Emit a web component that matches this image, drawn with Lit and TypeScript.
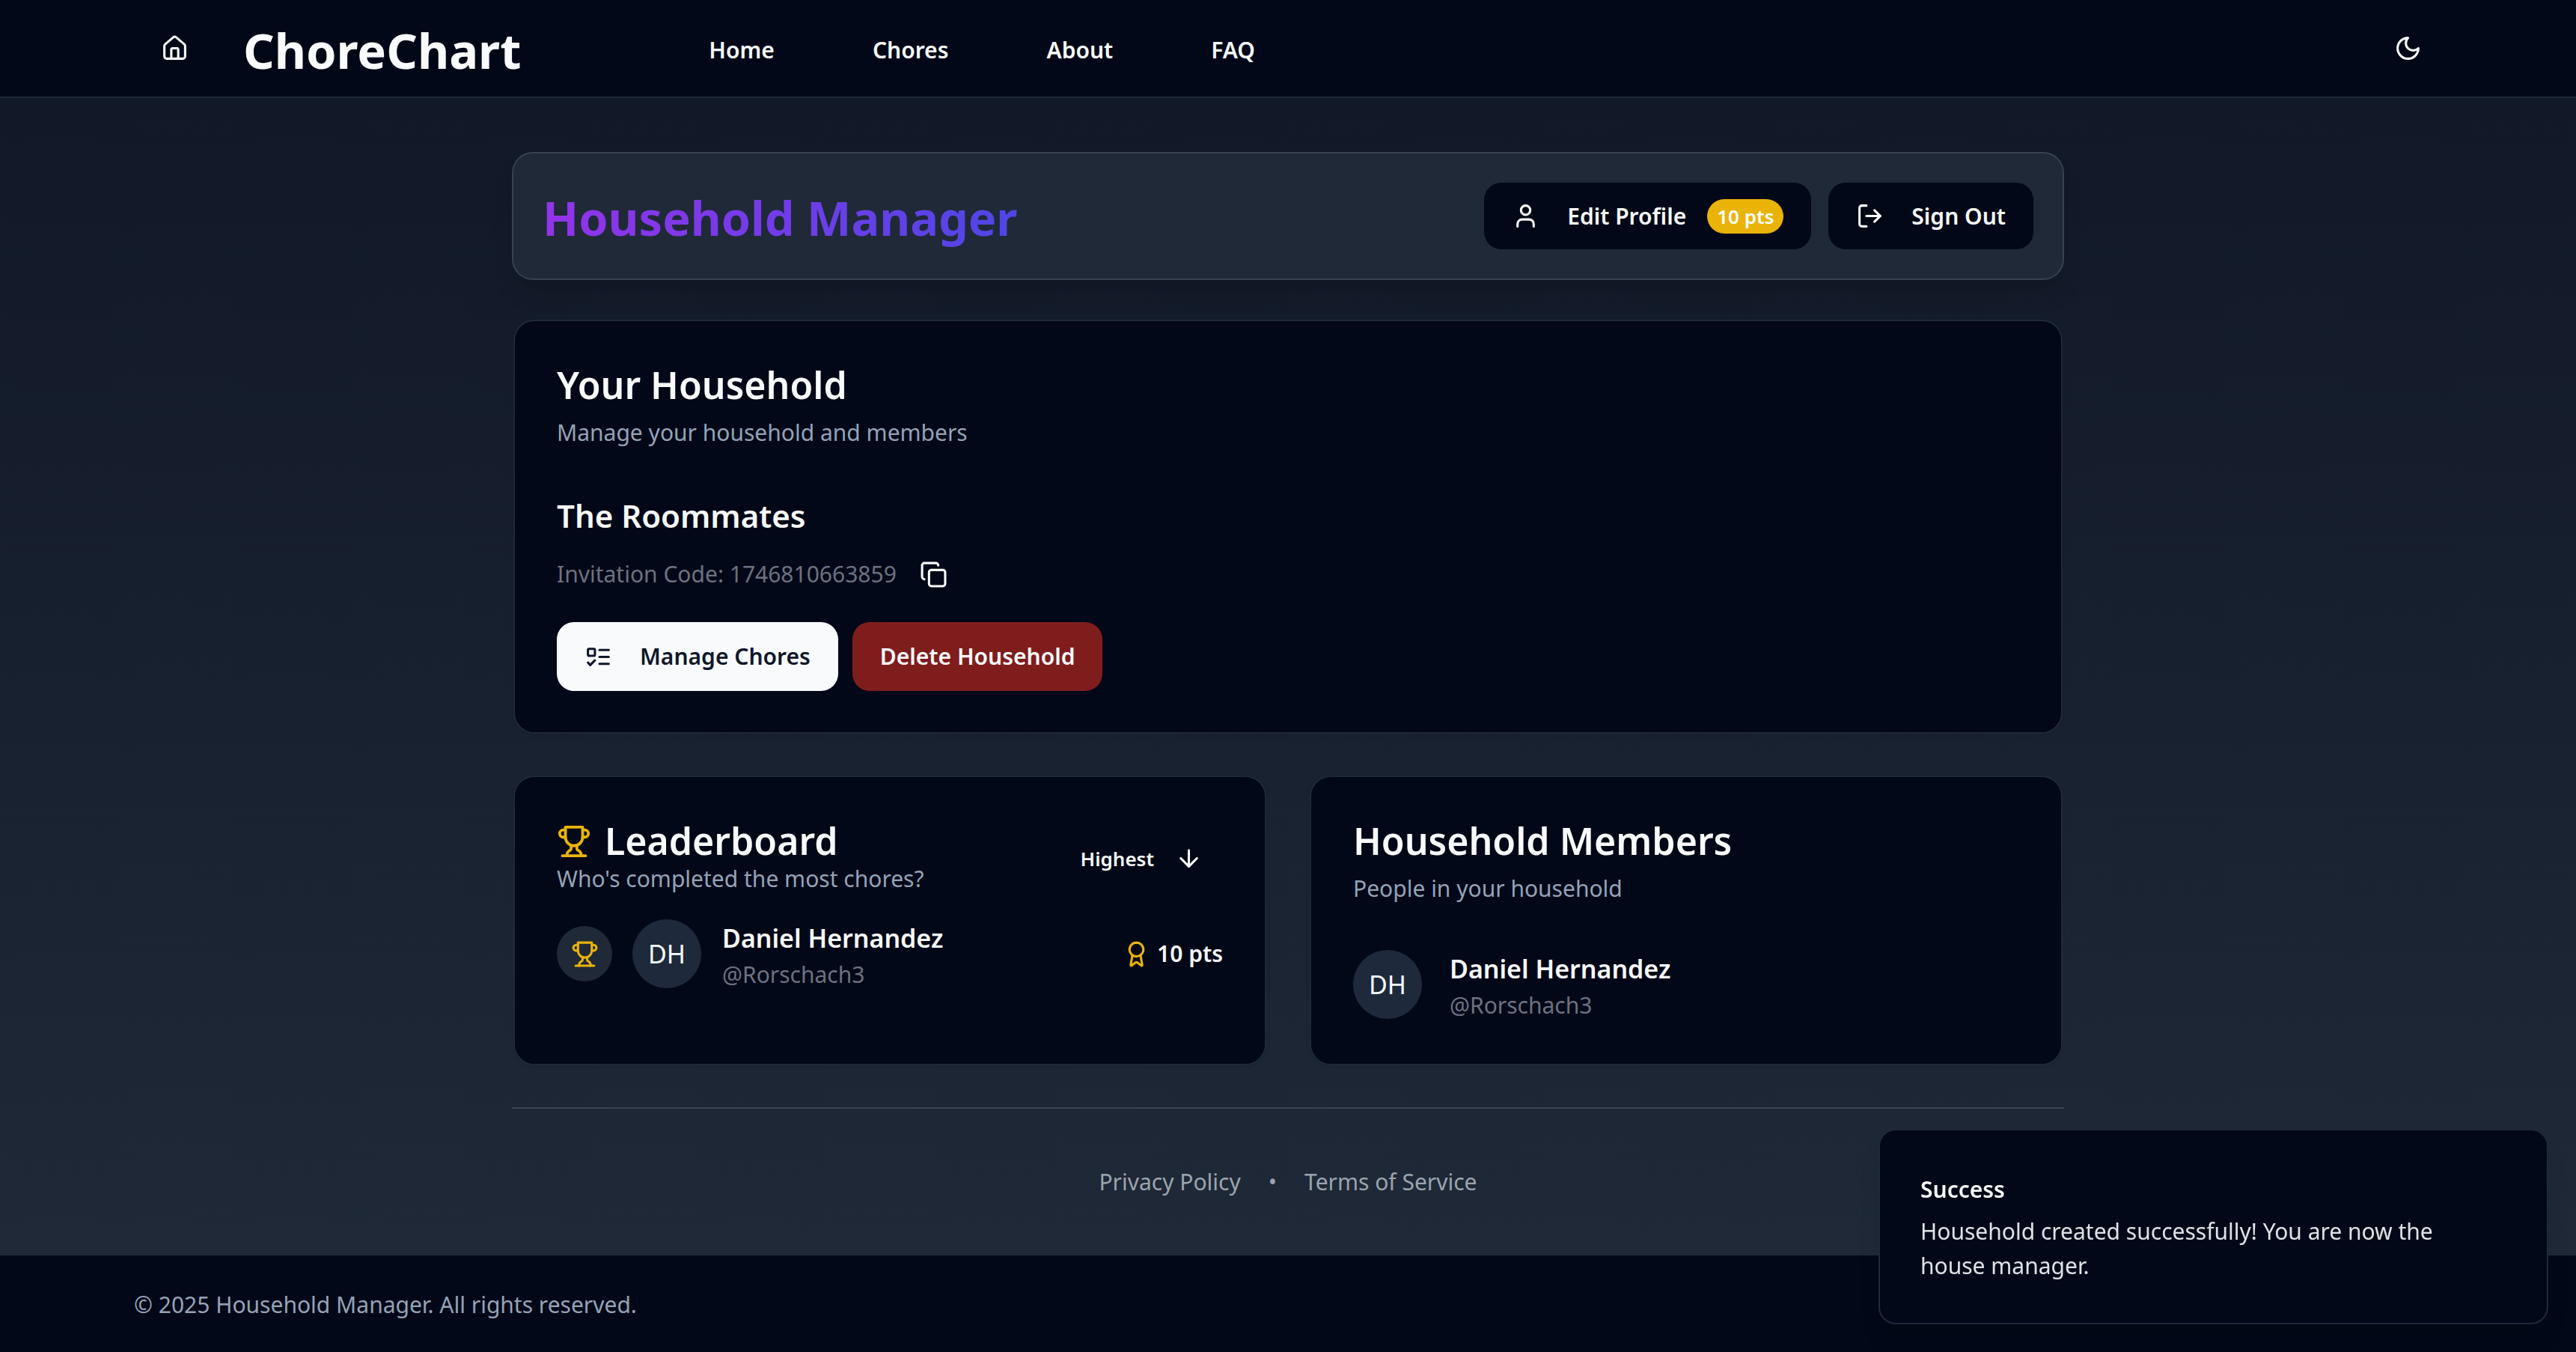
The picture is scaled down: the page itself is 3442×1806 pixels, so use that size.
import { LitElement, html, css, svg } from "lit";
import { customElement } from "lit/decorators.js";

const paths = {
  house: svg`<path d="M15 21v-8a1 1 0 0 0-1-1h-4a1 1 0 0 0-1 1v8"/><path d="M3 10a2 2 0 0 1 .709-1.528l7-5.999a2 2 0 0 1 2.582 0l7 5.999A2 2 0 0 1 21 10v9a2 2 0 0 1-2 2H5a2 2 0 0 1-2-2z"/>`,
  moon: svg`<path d="M12 3a6 6 0 0 0 9 9 9 9 0 1 1-9-9Z"/>`,
  user: svg`<path d="M19 21v-2a4 4 0 0 0-4-4H9a4 4 0 0 0-4 4v2"/><circle cx="12" cy="7" r="4"/>`,
  logout: svg`<path d="M9 21H5a2 2 0 0 1-2-2V5a2 2 0 0 1 2-2h4"/><path d="m16 17 5-5-5-5"/><path d="M21 12H9"/>`,
  copy: svg`<rect width="14" height="14" x="8" y="8" rx="2" ry="2"/><path d="M4 16c-1.1 0-2-.9-2-2V4c0-1.1.9-2 2-2h10c1.1 0 2 .9 2 2"/>`,
  todo: svg`<rect x="3" y="5" width="6" height="6" rx="1"/><path d="m3 17 2 2 4-4"/><path d="M13 6h8"/><path d="M13 12h8"/><path d="M13 18h8"/>`,
  trophy: svg`<path d="M6 9H4.5a2.5 2.5 0 0 1 0-5H6"/><path d="M18 9h1.5a2.5 2.5 0 0 0 0-5H18"/><path d="M4 22h16"/><path d="M10 14.66V17c0 .55-.47.98-.97 1.21C7.85 18.75 7 20.24 7 22"/><path d="M14 14.66V17c0 .55.47.98.97 1.21C16.15 18.75 17 20.24 17 22"/><path d="M18 2H6v7a6 6 0 0 0 12 0V2Z"/>`,
  arrowDown: svg`<path d="M12 5v14"/><path d="m19 12-7 7-7-7"/>`,
  award: svg`<path d="m15.477 12.89 1.515 8.526a.5.5 0 0 1-.81.47l-3.58-2.687a1 1 0 0 0-1.197 0l-3.586 2.686a.5.5 0 0 1-.81-.469l1.514-8.526"/><circle cx="12" cy="8" r="6"/>`,
};

const icon = (name: keyof typeof paths, cls = "") => html`<svg
  class="icon ${cls}" viewBox="0 0 24 24" fill="none" stroke="currentColor"
  stroke-width="2" stroke-linecap="round" stroke-linejoin="round" aria-hidden="true"
>${paths[name]}</svg>`;

const person = { name: "Daniel Hernandez", handle: "@Rorschach3", initials: "DH", points: 10 };
const nav = ["Home", "Chores", "About", "FAQ"];

@customElement("app-root")
export class AppRoot extends LitElement {
  static styles = css`
    :host {
      display: flex;
      flex-direction: column;
      min-height: 100vh;
      font: 400 30px/46px "Noto Sans", "Open Sans", sans-serif;
      color: #f8fafc;
      background: #020817;
    }
    * { box-sizing: border-box; margin: 0; }
    a { color: inherit; text-decoration: none; }
    button {
      font: inherit;
      color: inherit;
      background: none;
      border: 0;
      padding: 0;
      cursor: pointer;
    }
    .icon { width: 37px; height: 37px; flex: none; display: block; }
    .icon.large { width: 46px; height: 46px; }
    .gold { color: #eab308; }

    .topbar {
      display: flex;
      align-items: center;
      height: 131px;
      padding: 0 206px 0 215px;
      border-bottom: 2px solid #1e293b;
    }
    .logo { font-size: 65px; line-height: 83px; font-weight: 700; padding-top: 6px; margin: 0 251px 0 73px; }
    .links { display: flex; gap: 131px; font-weight: 600; padding-top: 4px; }
    .theme { margin-left: auto; }

    .page {
      flex: 1;
      padding: 72px 40px 0;
      background: linear-gradient(#111827, #1f2937);
    }
    .column { max-width: 2074px; margin: 0 auto; }
    .banner {
      display: flex;
      align-items: center;
      justify-content: space-between;
      padding: 39px;
      border: 2px solid #374151;
      border-radius: 28px;
      background: #1f2937;
      box-shadow: 0 23px 35px -7px rgb(0 0 0 / 0.1), 0 9px 14px -9px rgb(0 0 0 / 0.1);
    }
    .title {
      font-size: 63px;
      line-height: 83px;
      font-weight: 700;
      padding-top: 4px;
      color: transparent;
      background: linear-gradient(to right, #9333ea, #4f46e5);
      -webkit-background-clip: text;
      background-clip: text;
    }
    .actions { display: flex; gap: 23px; }
    .btn {
      display: flex;
      align-items: center;
      gap: 37px;
      height: 89px;
      padding: 0 37px;
      border-radius: 23px;
      font-weight: 600;
      background: #020817;
    }
    .buttons .btn { height: 92px; }
    .btn.light { background: #f8fafc; color: #0f172a; }
    .btn.danger { background: #7f1d1d; }
    .with-badge { display: flex; align-items: center; gap: 28px; }
    .badge {
      padding: 0 13px;
      border-radius: 24px;
      font-size: 26px;
      background: #eab308;
      color: #fff;
    }

    .cards { padding: 53px 2px 56px; display: grid; grid-template-columns: 1fr 1fr; gap: 56px 58px; }
    .card {
      padding: 58px 56px 55px;
      border: 2px solid #1e293b;
      border-radius: 28px;
      background: #020817;
      box-shadow: 0 2px 5px rgb(0 0 0 / 0.1);
    }
    .card.wide { grid-column: 1 / -1; }
    h2 { font-size: 50px; line-height: 55px; font-weight: 600; }
    h3 { font-size: 42px; line-height: 68px; font-weight: 600; }
    .sub { color: #94a3b8; }
    .wide .sub, .members .sub { margin: 13px 0 54px; }
    .muted { color: #6b7280; }
    .code { display: flex; align-items: center; gap: 31px; margin: 21px 0 41px; }
    .row { display: flex; align-items: center; }
    .buttons { gap: 19px; }
    .board-head { justify-content: space-between; margin-bottom: 26px; }
    .board-title { gap: 18px; }
    .sort {
      display: flex;
      align-items: center;
      gap: 28px;
      padding-right: 27px;
      font-size: 26px;
      font-weight: 600;
    }
    .rank, .avatar {
      display: grid;
      place-items: center;
      flex: none;
      border-radius: 50%;
      background: #1e293b;
    }
    .rank { width: 74px; height: 74px; margin-right: 27px; background: #1f2937; }
    .avatar { width: 92px; height: 92px; margin-right: 28px; font-size: 34px; }
    .members .avatar { margin-right: 37px; }
    .identity { padding-top: 4px; }
    .name { font-size: 34px; line-height: 52px; font-weight: 600; }
    .points { display: flex; align-items: center; gap: 9px; margin-left: auto; font-weight: 600; }

    .legal {
      display: flex;
      justify-content: center;
      gap: 37px;
      padding: 75px 0;
      border-top: 2px solid #374151;
      color: #9ca3af;
    }
    .footer { padding: 43px 179px 40px; color: #94a3b8; }

    .toast {
      position: fixed;
      right: 37px;
      bottom: 37px;
      width: 895px;
      padding: 56px 54px 53px;
      border: 2px solid #1e293b;
      border-radius: 23px;
      background: #020817;
      box-shadow: 0 23px 35px -7px rgb(0 0 0 / 0.1), 0 9px 14px -9px rgb(0 0 0 / 0.1);
    }
    .toast-title { font-weight: 600; margin-bottom: 10px; }
    .toast-text { opacity: 0.9; padding-right: 55px; }
  `;

  private identity() {
    return html`<div class="identity">
      <p class="name">${person.name}</p>
      <p class="muted">${person.handle}</p>
    </div>`;
  }

  render() {
    return html`
      <header class="topbar">
        <a href="#home" aria-label="Home page">${icon("house")}</a>
        <a class="logo" href="#home">ChoreChart</a>
        <nav class="links">
          ${nav.map((n) => html`<a href="#${n.toLowerCase()}">${n}</a>`)}
        </nav>
        <button class="theme" aria-label="Toggle theme">${icon("moon")}</button>
      </header>

      <main class="page">
        <div class="column">
          <section class="banner">
            <h1 class="title">Household Manager</h1>
            <div class="actions">
              <button class="btn">
                ${icon("user")}
                <span class="with-badge">Edit Profile <span class="badge">${person.points} pts</span></span>
              </button>
              <button class="btn">${icon("logout")} Sign Out</button>
            </div>
          </section>

          <div class="cards">
            <section class="card wide">
              <h2>Your Household</h2>
              <p class="sub">Manage your household and members</p>
              <h3>The Roommates</h3>
              <div class="code">
                <span class="muted">Invitation Code: 1746810663859</span>
                <button aria-label="Copy invitation code">${icon("copy")}</button>
              </div>
              <div class="row buttons">
                <button class="btn light">${icon("todo")} Manage Chores</button>
                <button class="btn danger">Delete Household</button>
              </div>
            </section>

            <section class="card">
              <div class="row board-head">
                <div>
                  <div class="row board-title">${icon("trophy", "large gold")}<h2>Leaderboard</h2></div>
                  <p class="sub">Who's completed the most chores?</p>
                </div>
                <button class="sort">Highest ${icon("arrowDown")}</button>
              </div>
              <div class="row">
                <span class="rank">${icon("trophy", "gold")}</span>
                <span class="avatar">${person.initials}</span>
                ${this.identity()}
                <span class="points">${icon("award", "gold")} ${person.points} pts</span>
              </div>
            </section>

            <section class="card members">
              <h2>Household Members</h2>
              <p class="sub">People in your household</p>
              <div class="row">
                <span class="avatar">${person.initials}</span>
                ${this.identity()}
              </div>
            </section>
          </div>

          <div class="legal">
            <a href="#privacy">Privacy Policy</a><span>•</span><a href="#terms">Terms of Service</a>
          </div>
        </div>
      </main>

      <footer class="footer">© 2025 Household Manager. All rights reserved.</footer>

      <div class="toast" role="status">
        <p class="toast-title">Success</p>
        <p class="toast-text">Household created successfully! You are now the house manager.</p>
      </div>
    `;
  }
}
